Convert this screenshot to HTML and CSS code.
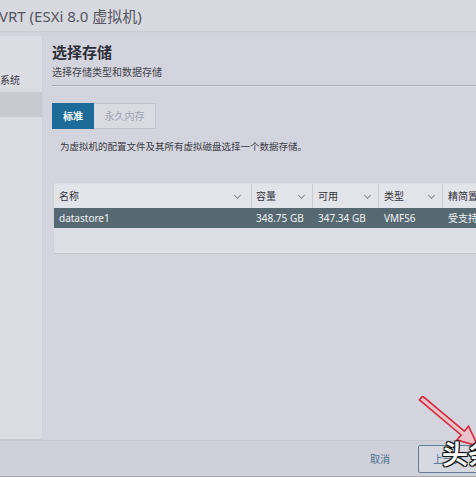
FILE: index.html
```html
<!DOCTYPE html>
<html lang="zh-CN">
<head>
<meta charset="utf-8">
<title>选择存储</title>
<link rel="stylesheet" href="styles.css">
</head>
<body>
<div class="app">
  <header class="topbar">VRT (ESXi 8.0 虚拟机)</header>
  <div class="body">
    <nav class="sidebar">
      <div class="nav-item">系统</div>
      <div class="nav-item selected"></div>
    </nav>
    <main class="main">
      <h1 class="title">选择存储</h1>
      <p class="subtitle">选择存储类型和数据存储</p>
      <div class="rule"></div>
      <div class="tabs">
        <div class="tab active">标准</div>
        <div class="tab">永久内存</div>
      </div>
      <p class="desc">为虚拟机的配置文件及其所有虚拟磁盘选择一个数据存储。</p>
      <div class="table">
        <div class="row head">
          <div class="cell c1">名称<span class="caret"></span></div>
          <div class="cell c2">容量<span class="caret"></span></div>
          <div class="cell c3">可用<span class="caret"></span></div>
          <div class="cell c4">类型<span class="caret"></span></div>
          <div class="cell c5">精简置备</div>
        </div>
        <div class="row sel">
          <div class="cell c1">datastore1</div>
          <div class="cell c2">348.75 GB</div>
          <div class="cell c3">347.34 GB</div>
          <div class="cell c4">VMFS6</div>
          <div class="cell c5">受支持</div>
        </div>
        <div class="empty"></div>
      </div>
    </main>
  </div>
  <footer class="footer">
    <span class="link">取消</span>
    <span class="btn">上一页</span>
  </footer>
  <svg class="arrow" width="62" height="52" viewBox="0 0 62 52">
    <polygon points="4.6,0.1 46.3,35.2 50.5,30.2 60,50 38.9,44 43.1,39 1.4,3.9" fill="#e9c3c9" stroke="#d8283a" stroke-width="1.6" stroke-linejoin="miter"/>
  </svg>
  <div class="watermark">头条</div>
</div>
</body>
</html>
```
FILE: styles.css
```css
* { box-sizing: border-box; }
html, body { margin: 0; padding: 0; }
body {
  width: 476px;
  height: 477px;
  overflow: hidden;
  background: #d2d2dc;
  font-family: "Noto Sans", "Noto Sans CJK SC", sans-serif;
  color: #3a3a44;
}
.app {
  position: relative;
  width: 476px;
  height: 477px;
  display: flex;
  flex-direction: column;
  border-bottom: 1px solid #a8a8b2;
  overflow: hidden;
}
.topbar {
  height: 32px;
  flex: none;
  background: #d8d8e1;
  border-bottom: 1px solid #cbcbd4;
  font-size: 15px;
  line-height: 32px;
  color: #55555f;
  margin-left: -1px;
  white-space: nowrap;
}
.body {
  flex: 1;
  display: flex;
  padding-top: 4px;
  min-height: 0;
}
.sidebar {
  width: 43px;
  flex: none;
  background: #dcdce5;
  border-right: 1px solid #cfcfd8;
  border-bottom: 1px solid #c8c8d2;
  border-bottom-right-radius: 3px;
  padding-top: 33px;
  display: flex;
  flex-direction: column;
}
.nav-item {
  height: 22px;
  font-size: 10px;
  line-height: 22px;
  color: #3a3a44;
  white-space: nowrap;
}
.nav-item.selected {
  margin-top: 1px;
  height: 25px;
  background: #c9c9d2;
}
.main {
  flex: 1;
  min-width: 0;
  background: #d4d4df;
  padding: 6px 0 0 9px;
  overflow: hidden;
}
.title {
  margin: 0;
  font-size: 15px;
  font-weight: 700;
  line-height: 20px;
  color: #2e2e38;
}
.subtitle {
  margin: 3px 0 0;
  font-size: 10px;
  line-height: 14px;
  color: #44444e;
}
.rule {
  margin-top: 6px;
  height: 1px;
  background: #a9a9b4;
  box-shadow: 0 1px 0 #e0e0e8;
}
.tabs {
  display: flex;
  margin-top: 17px;
  height: 26px;
}
.tab {
  height: 26px;
  line-height: 24px;
  font-size: 10px;
  padding: 0 8px;
  border: 1px solid #c2c2cc;
  border-left: none;
  background: #dadae3;
  color: #9aa4b0;
}
.tab.active {
  width: 42px;
  text-align: center;
  background: #1d6b98;
  border: 1px solid #1d6b98;
  color: #ffffff;
  font-weight: 700;
}
.tab:last-child { width: 62px; text-align: center; border-radius: 0 2px 2px 0; }
.desc {
  margin: 11px 0 0 8px;
  font-size: 9.5px;
  line-height: 13px;
  color: #3c3c46;
  white-space: nowrap;
}
.table {
  margin-top: 30px;
  margin-left: 1px;
  width: 460px;
  border-left: 1px solid #cfcfd8;
}
.row {
  display: grid;
  grid-template-columns: 198px 61px 66px 64px 71px;
}
.row.head {
  height: 25px;
  background: #e3e3ea;
  border-top: 1px solid #dcdce4;
}
.row.head .cell {
  border-right: 1px solid #cacad3;
  font-size: 10px;
  line-height: 24px;
  color: #33333d;
  position: relative;
}
.cell {
  padding-left: 5px;
  white-space: nowrap;
  overflow: hidden;
}
.c2 { padding-left: 4px; }
.caret {
  position: absolute;
  right: 8px;
  top: 9px;
  width: 5px;
  height: 5px;
  border-right: 1px solid #8a8a94;
  border-bottom: 1px solid #8a8a94;
  transform: rotate(45deg);
}
.c1 .caret { right: 11px; }
.row.sel {
  height: 20px;
  background: #566973;
}
.row.sel .cell {
  font-size: 10px;
  line-height: 20px;
  color: #f2f4f6;
}
.empty {
  height: 26px;
  background: #dedee6;
  border-bottom: 1px solid #c4c4ce;
}
.footer {
  height: 36px;
  flex: none;
  background: #d0d0da;
  border-top: 1px solid #c8c8d2;
  display: flex;
  align-items: center;
  padding-left: 370px;
  gap: 28px;
}
.link {
  flex: none;
  font-size: 10px;
  color: #4d7090;
  white-space: nowrap;
}
.btn {
  flex: none;
  height: 28px;
  padding: 0 14px;
  line-height: 26px;
  border: 1px solid #5f7e98;
  border-radius: 2px;
  font-size: 10px;
  color: #3f6d94;
  background: #d6d8e2;
  white-space: nowrap;
}
.arrow {
  position: absolute;
  left: 418px;
  top: 396px;
}
.watermark {
  position: absolute;
  left: 442px;
  top: 438px;
  font-size: 26px;
  font-weight: 700;
  line-height: 32px;
  color: #ffffff;
  white-space: nowrap;
  text-shadow: 1px 1px 0 #111, -1px -1px 0 #111, 1px -1px 0 #111, -1px 1px 0 #111, 0 0 2px #000;
}
```
